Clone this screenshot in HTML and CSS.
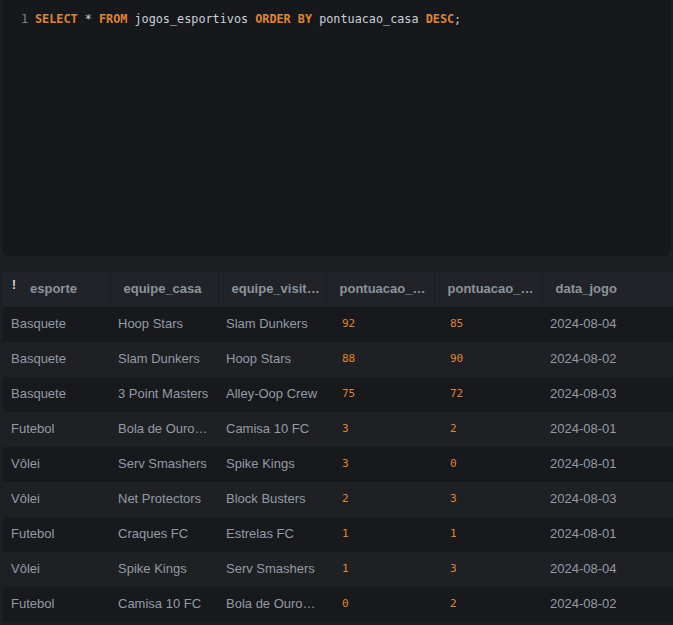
FILE: index.html
```html
<!DOCTYPE html>
<html lang="pt">
<head>
<meta charset="utf-8">
<link rel="stylesheet" href="styles.css">
</head>
<body>
<div class="editor">
  <div class="line"><span class="ln">1</span><span class="code"><span class="kw">SELECT</span> * <span class="kw">FROM</span> jogos_esportivos <span class="kw">ORDER BY</span> pontuacao_casa <span class="kw">DESC</span>;</span></div>
</div>
<div class="results">
  <table class="grid">
    <thead>
      <tr>
        <th class="first"><span class="key">!</span>esporte</th>
        <th>equipe_casa</th>
        <th>equipe_visitante</th>
        <th>pontuacao_casa</th>
        <th>pontuacao_visitante</th>
        <th class="last">data_jogo</th>
      </tr>
    </thead>
    <tbody>
      <tr><td>Basquete</td><td>Hoop Stars</td><td>Slam Dunkers</td><td class="num">92</td><td class="num">85</td><td>2024-08-04</td></tr>
      <tr><td>Basquete</td><td>Slam Dunkers</td><td>Hoop Stars</td><td class="num">88</td><td class="num">90</td><td>2024-08-02</td></tr>
      <tr><td>Basquete</td><td>3 Point Masters</td><td>Alley-Oop Crew</td><td class="num">75</td><td class="num">72</td><td>2024-08-03</td></tr>
      <tr><td>Futebol</td><td>Bola de Ouro FC</td><td>Camisa 10 FC</td><td class="num">3</td><td class="num">2</td><td>2024-08-01</td></tr>
      <tr><td>Vôlei</td><td>Serv Smashers</td><td>Spike Kings</td><td class="num">3</td><td class="num">0</td><td>2024-08-01</td></tr>
      <tr><td>Vôlei</td><td>Net Protectors</td><td>Block Busters</td><td class="num">2</td><td class="num">3</td><td>2024-08-03</td></tr>
      <tr><td>Futebol</td><td>Craques FC</td><td>Estrelas FC</td><td class="num">1</td><td class="num">1</td><td>2024-08-01</td></tr>
      <tr><td>Vôlei</td><td>Spike Kings</td><td>Serv Smashers</td><td class="num">1</td><td class="num">3</td><td>2024-08-04</td></tr>
      <tr><td>Futebol</td><td>Camisa 10 FC</td><td>Bola de Ouro FC</td><td class="num">0</td><td class="num">2</td><td>2024-08-02</td></tr>
    </tbody>
  </table>
</div>
</body>
</html>
```
FILE: styles.css
```css
html, body {
  margin: 0;
  padding: 0;
  background: #1e1f23;
  height: 100%;
  overflow: hidden;
}
body {
  font-family: "Liberation Sans", Arial, sans-serif;
}
.editor {
  height: 256px;
  margin: 0 2px;
  background: #17181c;
  border-radius: 0 0 7px 7px;
  box-sizing: border-box;
  padding-top: 12px;
}
.line {
  display: flex;
  font-family: "DejaVu Sans Mono", "Liberation Mono", monospace;
  font-size: 11.8px;
  line-height: 15px;
  color: #c9d1d9;
  white-space: pre;
}
.ln {
  width: 33px;
  box-sizing: border-box;
  padding-left: 19px;
  color: #7b838d;
}
.kw {
  color: #e0842f;
  font-weight: bold;
}
.results {
  margin-top: 16px;
  padding-left: 3px;
}
.grid {
  border-collapse: collapse;
  table-layout: fixed;
  width: 670px;
}
.grid th, .grid td {
  width: 108px;
  max-width: 108px;
  overflow: hidden;
  text-overflow: ellipsis;
  white-space: nowrap;
  height: 35px;
  box-sizing: border-box;
  padding: 0 0 2px 0;
  text-align: left;
  font-size: 13px;
}
.grid th.first, .grid td:first-child {
  width: 107px;
  max-width: 107px;
}
.grid th.last {
  width: 131px;
  max-width: 131px;
}
.grid th {
  background: #222328;
  color: #8b939c;
  font-weight: bold;
  padding-left: 13px;
  padding-right: 5px;
  border-right: 1px solid #1c1d21;
}
.grid th.first {
  position: relative;
  padding-left: 27px;
}
.grid th.last {
  border-right: none;
}
.key {
  position: absolute;
  left: 9px;
  top: 6px;
  font-size: 12px;
  color: #d4d7dc;
  font-weight: bold;
}
.grid td {
  color: #939ba5;
  padding-left: 8px;
  padding-right: 8px;
}
.grid tbody tr:nth-child(odd) td {
  background: #18191d;
}
.grid tbody tr:nth-child(even) td {
  background: #1f2024;
}
.grid td.num {
  font-family: "DejaVu Sans Mono", "Liberation Mono", monospace;
  font-size: 11px;
  color: #e0842f;
  padding-left: 16px;
}
```
